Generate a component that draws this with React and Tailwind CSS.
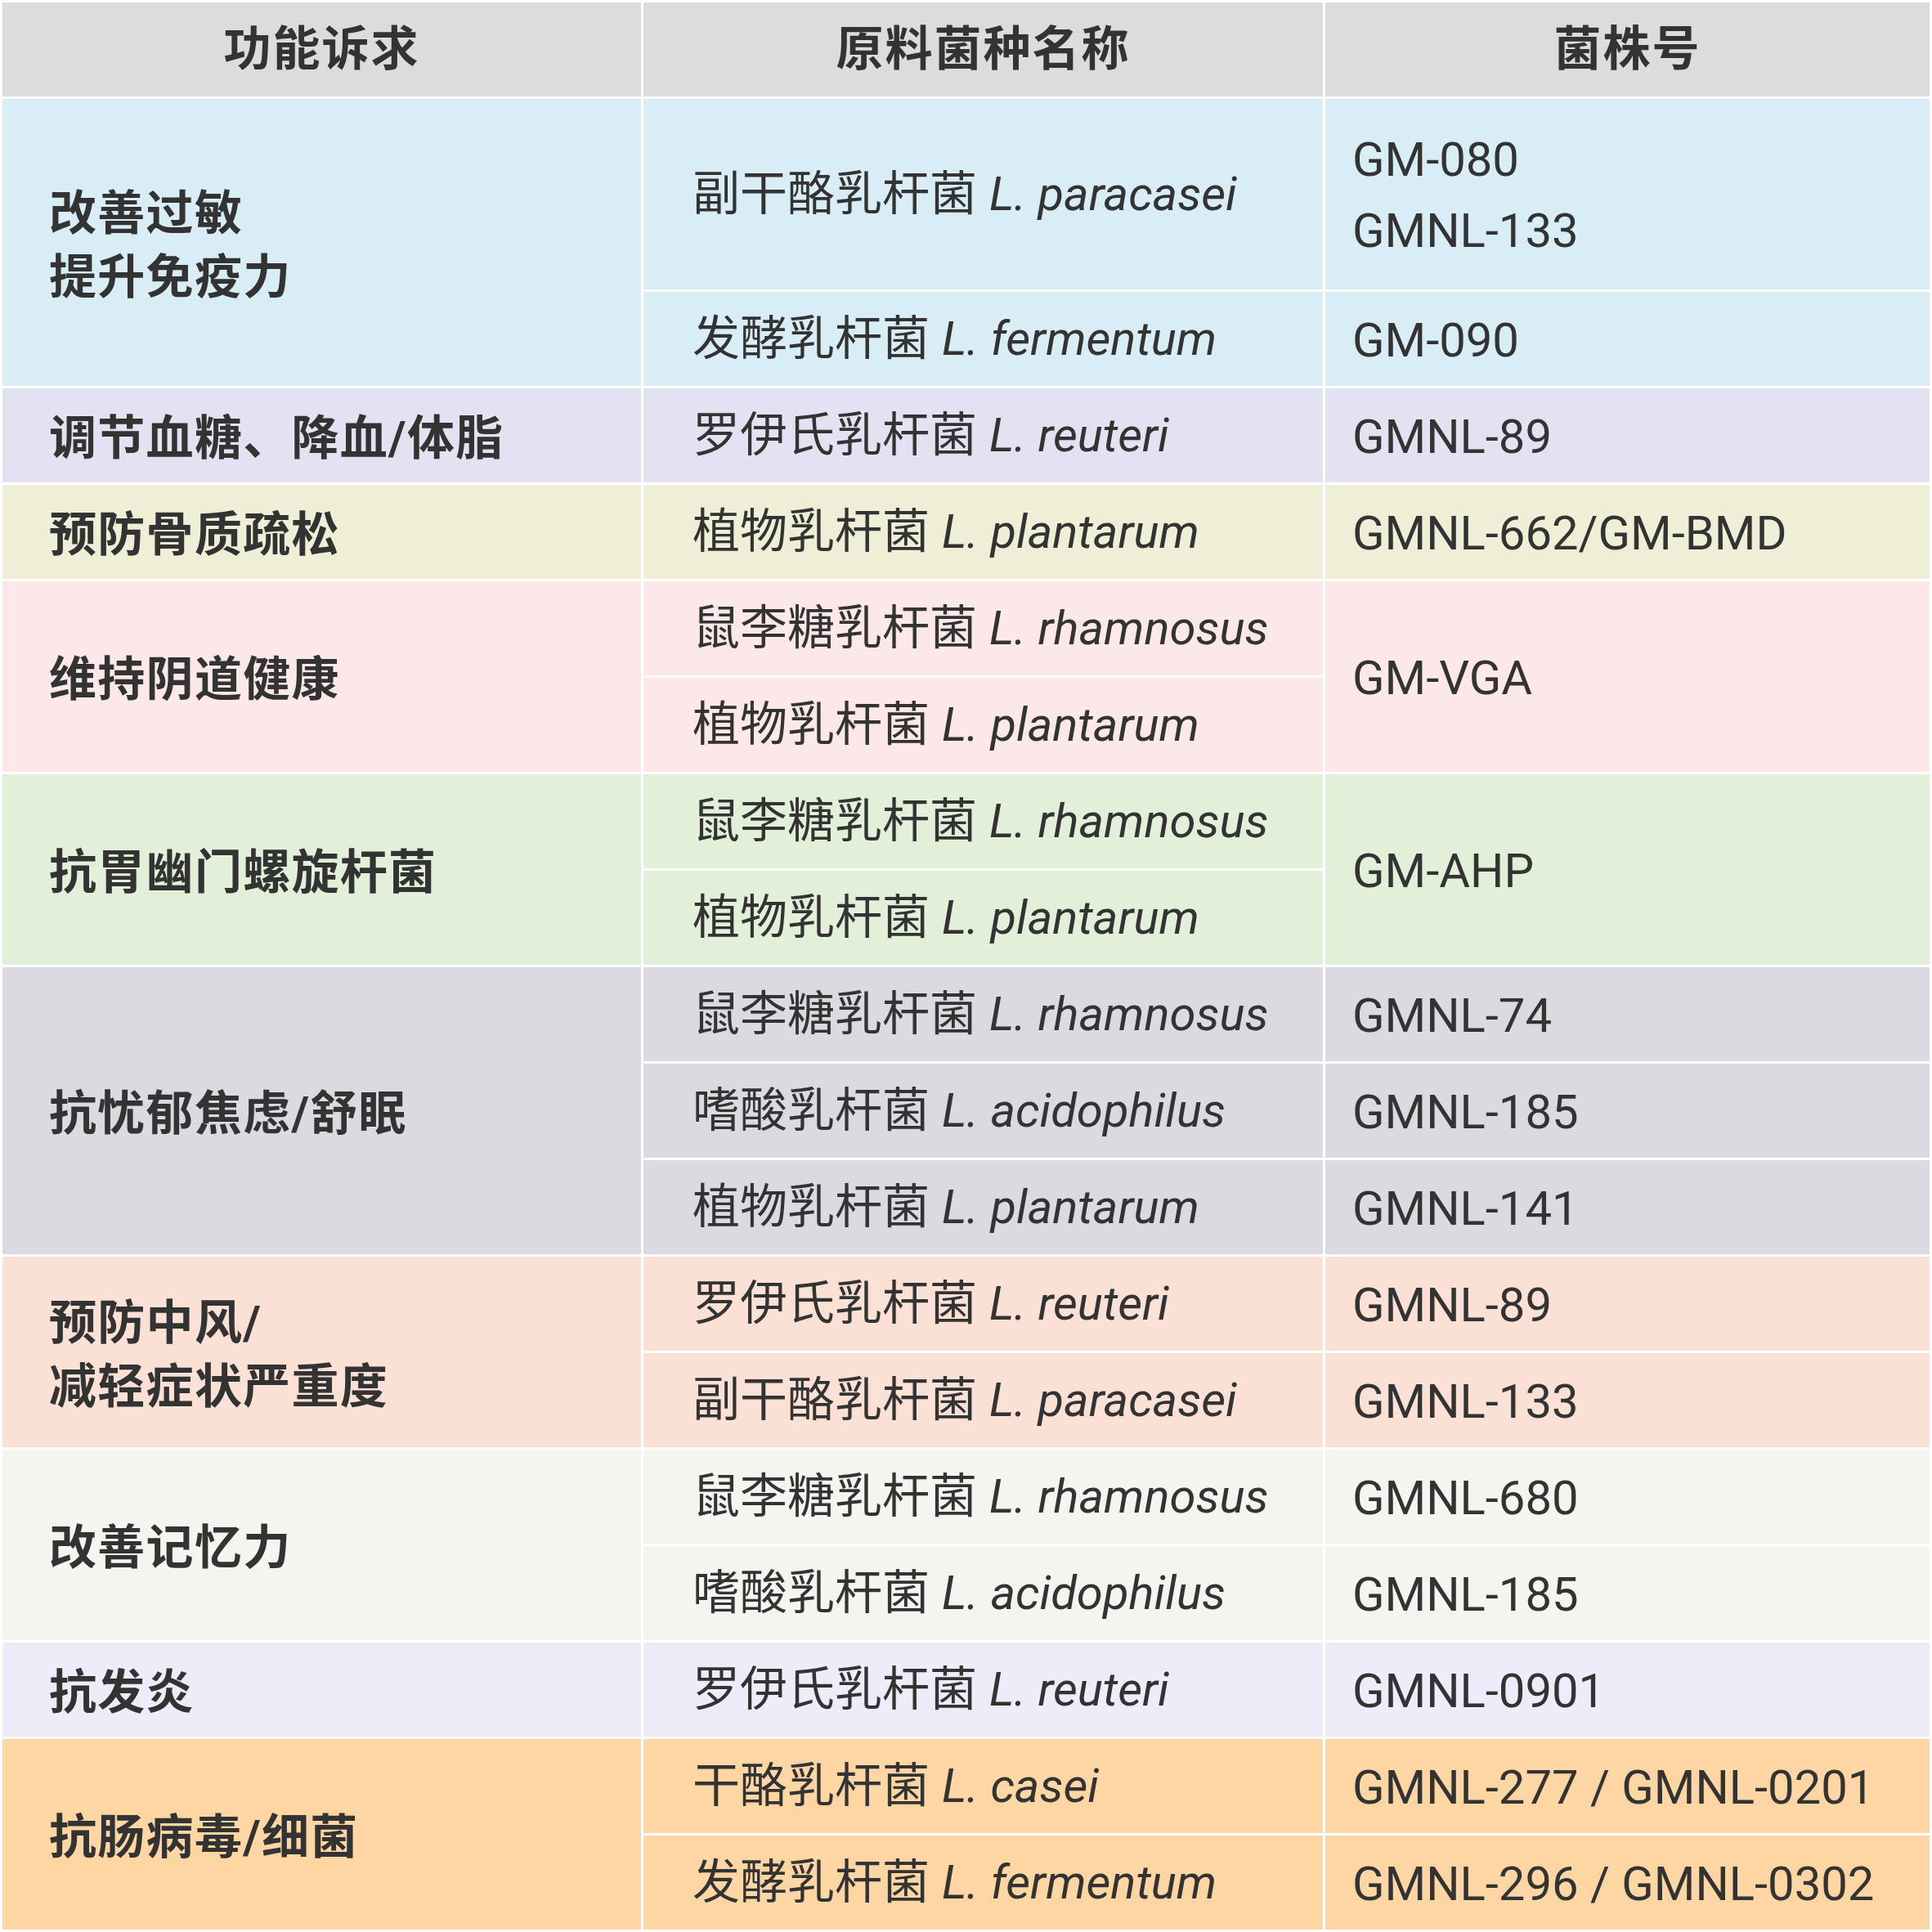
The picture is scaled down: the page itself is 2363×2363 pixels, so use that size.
const rows = [
  {
    claim: ['改善过敏', '提升免疫力'],
    span: 'row-span-3',
    bg: 'bg-[#d8edf5]',
    strains: [
      { zh: '副干酪乳杆菌', la: 'paracasei', tall: true },
      { zh: '发酵乳杆菌', la: 'fermentum' },
    ],
    codes: [{ lines: ['GM-080', 'GMNL-133'], span: 'row-span-2' }, { lines: ['GM-090'] }],
  },
  {
    claim: ['调节血糖、降血/体脂'],
    bg: 'bg-[#e3e2f2]',
    strains: [{ zh: '罗伊氏乳杆菌', la: 'reuteri' }],
    codes: [{ lines: ['GMNL-89'] }],
  },
  {
    claim: ['预防骨质疏松'],
    bg: 'bg-[#eeefd6]',
    strains: [{ zh: '植物乳杆菌', la: 'plantarum' }],
    codes: [{ lines: ['GMNL-662/GM-BMD'] }],
  },
  {
    claim: ['维持阴道健康'],
    span: 'row-span-2',
    bg: 'bg-[#fde8e9]',
    strains: [
      { zh: '鼠李糖乳杆菌', la: 'rhamnosus' },
      { zh: '植物乳杆菌', la: 'plantarum' },
    ],
    codes: [{ lines: ['GM-VGA'], span: 'row-span-2' }],
  },
  {
    claim: ['抗胃幽门螺旋杆菌'],
    span: 'row-span-2',
    bg: 'bg-[#e2efd9]',
    strains: [
      { zh: '鼠李糖乳杆菌', la: 'rhamnosus' },
      { zh: '植物乳杆菌', la: 'plantarum' },
    ],
    codes: [{ lines: ['GM-AHP'], span: 'row-span-2' }],
  },
  {
    claim: ['抗忧郁焦虑/舒眠'],
    span: 'row-span-3',
    bg: 'bg-[#dadae0]',
    strains: [
      { zh: '鼠李糖乳杆菌', la: 'rhamnosus' },
      { zh: '嗜酸乳杆菌', la: 'acidophilus' },
      { zh: '植物乳杆菌', la: 'plantarum' },
    ],
    codes: [{ lines: ['GMNL-74'] }, { lines: ['GMNL-185'] }, { lines: ['GMNL-141'] }],
  },
  {
    claim: ['预防中风/', '减轻症状严重度'],
    span: 'row-span-2',
    bg: 'bg-[#fae0d5]',
    strains: [
      { zh: '罗伊氏乳杆菌', la: 'reuteri' },
      { zh: '副干酪乳杆菌', la: 'paracasei' },
    ],
    codes: [{ lines: ['GMNL-89'] }, { lines: ['GMNL-133'] }],
  },
  {
    claim: ['改善记忆力'],
    span: 'row-span-2',
    bg: 'bg-[#f4f4f0]',
    strains: [
      { zh: '鼠李糖乳杆菌', la: 'rhamnosus' },
      { zh: '嗜酸乳杆菌', la: 'acidophilus' },
    ],
    codes: [{ lines: ['GMNL-680'] }, { lines: ['GMNL-185'] }],
  },
  {
    claim: ['抗发炎'],
    bg: 'bg-[#edecf8]',
    strains: [{ zh: '罗伊氏乳杆菌', la: 'reuteri' }],
    codes: [{ lines: ['GMNL-0901'] }],
  },
  {
    claim: ['抗肠病毒/细菌'],
    span: 'row-span-2',
    bg: 'bg-[#fdd6a4]',
    strains: [
      { zh: '干酪乳杆菌', la: 'casei' },
      { zh: '发酵乳杆菌', la: 'fermentum' },
    ],
    codes: [{ lines: ['GMNL-277 / GMNL-0201'] }, { lines: ['GMNL-296 / GMNL-0302'] }],
  },
]

export default function App() {
  return (
    <div className="w-[2363px] h-[2363px] bg-white p-[3px] font-['Roboto','Noto_Sans_CJK_SC',sans-serif] text-[#333333]">
      <div className="grid grid-cols-[781px_831px_739px] auto-rows-[115px] gap-[3px]">
        {['功能诉求', '原料菌种名称', '菌株号'].map(h => (
          <div key={h} className="bg-[#dcdcdc] flex items-center justify-center text-[58px] font-bold tracking-[2px]">
            {h}
          </div>
        ))}

        {rows.map((r, i) => {
          const cells = [
            <div key="c" className={`${r.span || ''} ${r.bg} flex flex-col justify-center pl-[57px] pt-[8px] text-[58px] font-bold leading-[1.33] tracking-[1.3px]`}>
              {r.claim.map(c => <div key={c}>{c}</div>)}
            </div>,
          ]
          r.strains.forEach((s, j) => {
            const code = r.codes[j]
            cells.push(
              <div key={'s' + j} className={`${s.tall ? 'row-span-2' : ''} ${r.bg} flex items-center pl-[60px] text-[58px] whitespace-nowrap`}>
                <span>{s.zh}</span>
                <span className="italic ml-[15px]">L. {s.la}</span>
              </div>
            )
            if (code) {
              cells.push(
                <div key={'g' + j} className={`${code.span || ''} ${r.bg} flex flex-col justify-center pl-[33px] pt-[3px] text-[58px] leading-[1.5] whitespace-nowrap`}>
                  {code.lines.map(l => <div key={l}>{l}</div>)}
                </div>
              )
            }
          })
          return cells
        })}
      </div>
    </div>
  )
}
